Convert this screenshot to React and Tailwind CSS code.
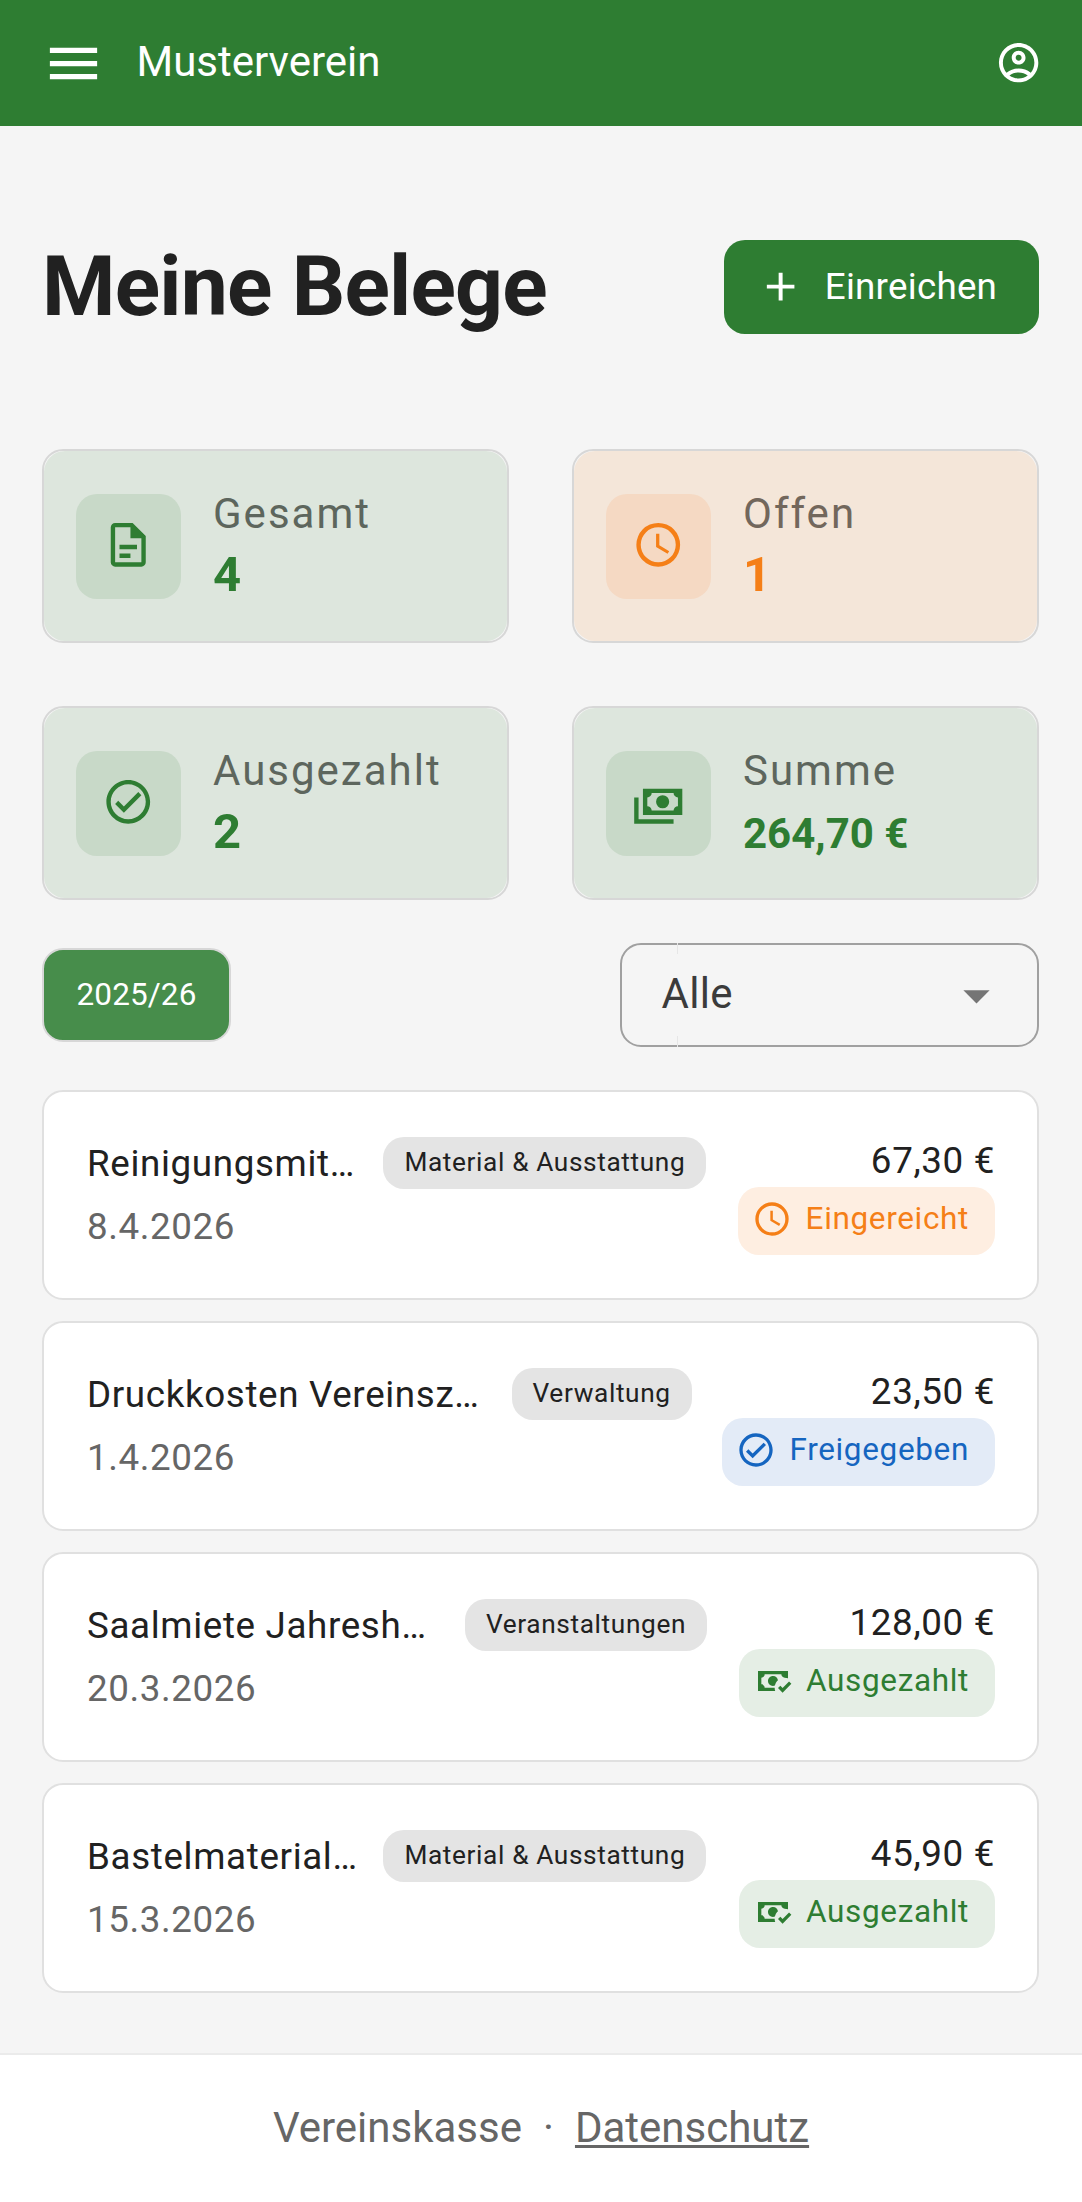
import React from 'react';

const icons = {
  menu: 'M3,6H21V8H3V6M3,11H21V13H3V11M3,16H21V18H3V16Z',
  account:
    'M12 2C6.5 2 2 6.5 2 12s4.5 10 10 10 10-4.5 10-10S17.5 2 12 2M7.35 18.5C8.66 17.56 10.26 17 12 17s3.34.56 4.65 1.5C15.34 19.44 13.74 20 12 20s-3.34-.56-4.65-1.5m10.79-1.38a9.947 9.947 0 0 0-12.28 0A7.96 7.96 0 0 1 4 12c0-4.42 3.58-8 8-8s8 3.58 8 8c0 1.95-.7 3.73-1.86 5.12M12 6c-1.93 0-3.5 1.57-3.5 3.5S10.07 13 12 13s3.5-1.57 3.5-3.5S13.93 6 12 6m0 5c-.83 0-1.5-.67-1.5-1.5S11.17 8 12 8s1.5.67 1.5 1.5S12.83 11 12 11',
  plus: 'M19,13H13V19H11V13H5V11H11V5H13V11H19V13Z',
  file: 'M6,2A2,2 0 0,0 4,4V20A2,2 0 0,0 6,22H18A2,2 0 0,0 20,20V8L14,2H6M6,4H13V9H18V20H6V4M8,12V14H16V12H8M8,16V18H13V16H8Z',
  clock:
    'M12,20A8,8 0 0,0 20,12A8,8 0 0,0 12,4A8,8 0 0,0 4,12A8,8 0 0,0 12,20M12,2A10,10 0 0,1 22,12A10,10 0 0,1 12,22C6.47,22 2,17.5 2,12A10,10 0 0,1 12,2M12.5,7V12.25L17,14.92L16.25,16.15L11,13V7H12.5Z',
  check:
    'M12 2C6.5 2 2 6.5 2 12S6.5 22 12 22 22 17.5 22 12 17.5 2 12 2M12 20C7.59 20 4 16.41 4 12S7.59 4 12 4 20 7.59 20 12 16.41 20 12 20M16.59 7.58L10 14.17L7.41 11.59L6 13L10 17L18 9L16.59 7.58Z',
  cash: 'M5,6H23V18H5V6M14,9A3,3 0 0,1 17,12A3,3 0 0,1 14,15A3,3 0 0,1 11,12A3,3 0 0,1 14,9M9,8A2,2 0 0,1 7,10V14A2,2 0 0,1 9,16H19A2,2 0 0,1 21,14V10A2,2 0 0,1 19,8H9M1,10H3V20H19V22H1V10Z',
  cashCheck:
    'M3 6V18H13.32C13.1 17.33 13 16.66 13 16H7C7 14.9 6.11 14 5 14V10C6.11 10 7 9.11 7 8H17C17 9.11 17.9 10 19 10V10.06C19.67 10.06 20.34 10.18 21 10.4V6H3M12 9C10.3 9.03 9 10.3 9 12C9 13.7 10.3 14.94 12 15C12.38 15 12.77 14.92 13.14 14.77C13.41 13.67 13.86 12.63 14.97 11.61C14.85 10.28 13.59 8.97 12 9M21.63 12.27L17.76 16.17L16.41 14.8L15 16.22L17.75 19L23.03 13.68L21.63 12.27Z',
  down: 'M7,10L12,15L17,10H7Z',
};

const Icon = ({ name, className }) => (
  <svg viewBox="0 0 24 24" fill="currentColor" className={`shrink-0 ${className}`}>
    <path d={icons[name]} />
  </svg>
);

const green = { card: 'bg-[#dde6dd]', tile: 'bg-[#c8d9c8]', label: 'text-[#5d665d]', value: 'text-[#2e7d32]' };
const orange = { card: 'bg-[#f4e6d9]', tile: 'bg-[#f5d9c3]', label: 'text-[#72675c]', value: 'text-[#f57f17]' };

const stats = [
  { label: 'Gesamt', value: '4', icon: 'file', tone: green },
  { label: 'Offen', value: '1', icon: 'clock', tone: orange },
  { label: 'Ausgezahlt', value: '2', icon: 'check', tone: green },
  { label: 'Summe', value: '264,70 €', icon: 'cash', tone: green, small: true },
];

const states = {
  Eingereicht: { icon: 'clock', style: 'bg-[#feeee1] text-[#f57f17]' },
  Freigegeben: { icon: 'check', style: 'bg-[#e3ebf7] text-[#1565c0]' },
  Ausgezahlt: { icon: 'cashCheck', style: 'bg-[#e5eee5] text-[#2e7d32]' },
};

const receipts = [
  { title: 'Reinigungsmit…', category: 'Material & Ausstattung', date: '8.4.2026', amount: '67,30 €', state: 'Eingereicht', titleWidth: 'w-[264.4px]' },
  { title: 'Druckkosten Vereinsz…', category: 'Verwaltung', date: '1.4.2026', amount: '23,50 €', state: 'Freigegeben', titleWidth: 'w-[392.6px]' },
  { title: 'Saalmiete Jahresh…', category: 'Veranstaltungen', date: '20.3.2026', amount: '128,00 €', state: 'Ausgezahlt', titleWidth: 'w-[346px]' },
  { title: 'Bastelmaterial…', category: 'Material & Ausstattung', date: '15.3.2026', amount: '45,90 €', state: 'Ausgezahlt', titleWidth: 'w-[264.4px]' },
];

const StatCard = ({ label, value, icon, tone, small }) => (
  <div className="h-[194px] rounded-[21px] border-2 border-[#d7d7d7]">
    <div className={`flex h-full items-center rounded-[21px] pl-8 ${tone.card}`}>
      <div className={`flex h-[105px] w-[105px] shrink-0 items-center justify-center rounded-[21px] ${tone.tile} ${tone.value}`}>
        <Icon name={icon} className="h-[52.5px] w-[52.5px] -translate-y-[1.5px]" />
      </div>
      <div className="ml-8">
        <div className={`text-[42px] leading-[54px] tracking-[2px] ${tone.label}`}>{label}</div>
        <div className={`font-bold ${small ? 'pt-1 text-[42px] leading-[61px]' : 'text-[49px] leading-[65px]'} ${tone.value}`}>
          <span className="inline-block translate-y-px">{value}</span>
        </div>
      </div>
    </div>
  </div>
);

const ReceiptCard = ({ title, category, date, amount, state, titleWidth }) => (
  <div className="flex h-[210px] justify-between rounded-[21px] border-2 border-[#e0e0e0] bg-white pl-[43px] pr-[42px]">
    <div className="pt-[42px]">
      <div className="flex items-start">
        <div className={`${titleWidth} whitespace-nowrap text-[36.75px] leading-[60px] tracking-[0.65px] text-[#212121]`}>{title}</div>
        <div className="ml-8 mt-[3px] flex h-[52px] items-center whitespace-nowrap rounded-[21px] bg-[#e4e4e4] px-[21px] text-[26.25px] tracking-[0.62px] text-[#212121]">
          {category}
        </div>
      </div>
      <div className="text-[36.75px] leading-[66px] tracking-[0.6px] text-[#666666]">{date}</div>
    </div>
    <div className="flex flex-col items-end pt-[42px]">
      <div className="text-[36.75px] leading-[53px] tracking-[0.65px] text-[#212121]">{amount}</div>
      <div className={`flex h-[68px] items-center rounded-[21px] pl-[14px] pr-[26px] ${states[state].style}`}>
        <Icon name={states[state].icon} className="h-10 w-10 -translate-y-[2px]" />
        <span className="ml-[13.5px] -translate-y-[2px] text-[31.5px] tracking-[0.65px]">{state}</span>
      </div>
    </div>
  </div>
);

const App = () => {
  return (
    <div className="flex h-[2202px] w-[1082px] flex-col overflow-hidden bg-[#f5f5f5] font-['Roboto',sans-serif]">
      <header className="flex h-[126px] items-center bg-[#2e7d32] pl-[42px] pr-10 text-white">
        <Icon name="menu" className="h-[63px] w-[63px]" />
        <div className="ml-[31.5px] pb-[3px] text-[42px]">Musterverein</div>
        <Icon name="account" className="ml-auto h-[47.25px] w-[47.25px]" />
      </header>

      <main className="pl-[42px] pr-[43px]">
        <div className="mt-[113px] flex h-[95px] items-center justify-between">
          <h1 className="pt-px text-[84px] font-bold tracking-[-0.8px] text-[#212121]">Meine Belege</h1>
          <button className="flex h-[94px] w-[315px] items-center rounded-[21px] bg-[#2e7d32] pl-[32.5px] pt-px text-white">
            <Icon name="plus" className="h-[47.25px] w-[47.25px]" />
            <span className="ml-[21px] text-[36.75px] tracking-[0.25px]">Einreichen</span>
          </button>
        </div>

        <div className="mt-[115px] grid grid-cols-2 gap-[63px]">
          {stats.map((stat) => (
            <StatCard key={stat.label} {...stat} />
          ))}
        </div>

        <div className="mt-[43px] flex h-[104px] items-center justify-between">
          <button className="flex h-[94px] w-[189px] items-center justify-center rounded-[21px] border-2 border-[#d7d7d7] bg-[#478d4b] text-[31.5px] tracking-[0.1px] text-white">
            2025/26
          </button>
          <div className="relative flex h-[104px] w-[419px] items-center justify-between rounded-[21px] border-2 border-[#a0a0a0] pl-[39.5px] pr-[29px]">
            <span className="absolute -top-0.5 left-[55px] h-[11px] w-px bg-[#e6e6e6]" />
            <span className="absolute -bottom-0.5 left-[55px] h-[11px] w-px bg-[#e6e6e6]" />
            <span className="pb-[3px] text-[42px] tracking-[0.3px] text-[#3b3b3b]">Alle</span>
            <Icon name="down" className="h-[63px] w-[63px] text-[#757575]" />
          </div>
        </div>

        <div className="mt-[43px] flex flex-col gap-[21px]">
          {receipts.map((receipt) => (
            <ReceiptCard key={receipt.title} {...receipt} />
          ))}
        </div>
      </main>

      <footer className="mt-auto flex h-[149px] items-center justify-center border-t-2 border-[#ebebeb] bg-white pb-[2px] text-[42px] text-[#666666]">
        <span>Vereinskasse</span>
        <span className="mx-[21px]">·</span>
        <a className="underline decoration-[3px] underline-offset-[3px]">Datenschutz</a>
      </footer>
    </div>
  );
};

export default App;
